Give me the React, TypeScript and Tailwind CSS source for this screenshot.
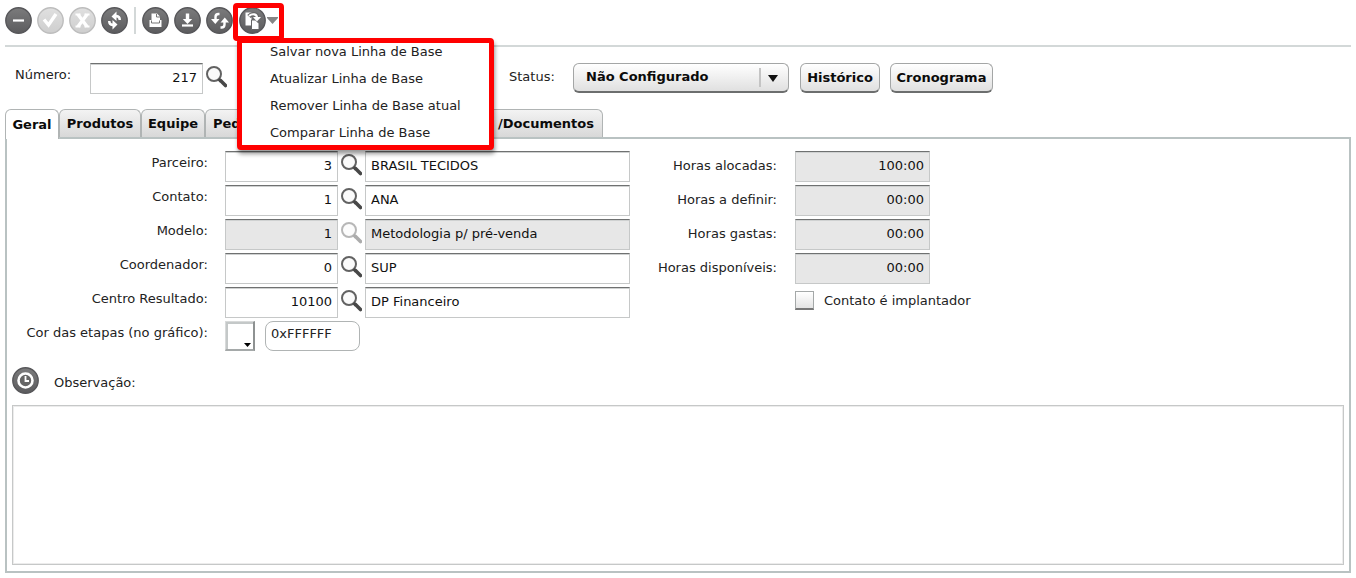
import React, { useState } from 'react';

type Field = {
  id: string;
  label: string;
  code: string;
  name: string;
  disabled?: boolean;
};

const fields: Field[] = [
  { id: 'parceiro', label: 'Parceiro:', code: '3', name: 'BRASIL TECIDOS' },
  { id: 'contato', label: 'Contato:', code: '1', name: 'ANA' },
  { id: 'modelo', label: 'Modelo:', code: '1', name: 'Metodologia p/ pré-venda', disabled: true },
  { id: 'coordenador', label: 'Coordenador:', code: '0', name: 'SUP' },
  { id: 'centro', label: 'Centro Resultado:', code: '10100', name: 'DP Financeiro' },
];

const hours = [
  { id: 'alocadas', label: 'Horas alocadas:', value: '100:00' },
  { id: 'definir', label: 'Horas a definir:', value: '00:00' },
  { id: 'gastas', label: 'Horas gastas:', value: '00:00' },
  { id: 'disponiveis', label: 'Horas disponíveis:', value: '00:00' },
];

const menuItems = [
  'Salvar nova Linha de Base',
  'Atualizar Linha de Base',
  'Remover Linha de Base atual',
  'Comparar Linha de Base',
];

const inputClass =
  'h-[31px] border border-[#c6c8c8] border-t-[#6f7171] px-[5px] pb-0.5 text-[13px] text-[#111] shadow-[inset_0_1px_0_#cfd1d1] outline-none';
const buttonClass =
  'h-[30px] rounded-md border border-[#a4a6a6] border-b-2 border-b-[#6c6e6e] bg-linear-to-b from-white to-[#e0e0e0] font-bold text-[#0b0b0b]';

// Round toolbar icon, the glyph goes in as children on a 27x27 canvas
const RoundIcon = ({ light, children }: { light?: boolean; children: React.ReactNode }) => (
  <svg className="h-[27px] w-[27px] shrink-0" viewBox="0 0 27 27" fill="none">
    <defs>
      <linearGradient id="dark" x1="0" y1="0" x2="0" y2="1">
        <stop offset="0" stopColor="#7b7b7c" />
        <stop offset="1" stopColor="#5c5c5e" />
      </linearGradient>
      <linearGradient id="light" x1="0" y1="0" x2="0" y2="1">
        <stop offset="0" stopColor="#e0e0e0" />
        <stop offset="1" stopColor="#cecece" />
      </linearGradient>
    </defs>
    <circle
      cx="13.5"
      cy="13.5"
      r="12.7"
      fill={light ? 'url(#light)' : 'url(#dark)'}
      stroke={light ? '#bdbdbd' : '#57575a'}
      strokeWidth="1.4"
    />
    {children}
  </svg>
);

const ToolButton = ({ label, light, children }: { label: string; light?: boolean; children: React.ReactNode }) => (
  <button type="button" aria-label={label} disabled={light} className="shrink-0">
    <RoundIcon light={light}>{children}</RoundIcon>
  </button>
);

const SearchButton = ({ label, disabled }: { label: string; disabled?: boolean }) => (
  <button type="button" aria-label={label} disabled={disabled} className="shrink-0">
    <svg className={disabled ? 'h-6 w-[21px] opacity-45' : 'h-6 w-[21px]'} viewBox="0 0 21 24" fill="none">
      <circle cx="8" cy="9" r="7" fill="#fafafa" stroke="#626262" strokeWidth="2" />
      <path d="M12.500 14l2.500 2.500" stroke="#4a4a4a" strokeWidth="3" />
      <path d="M14.500 15.500l5 5" stroke="#484848" strokeWidth="3.600" strokeLinecap="round" />
    </svg>
  </button>
);

const Toolbar = () => (
  <div className="flex h-[47px] gap-[5px] border-b-2 border-[#d3d8d8] pt-[7px] pb-[11px]">
    <ToolButton label="Remover">
      <path d="M8 13.5h11" stroke="#fff" strokeWidth="2.2" />
    </ToolButton>
    <ToolButton label="Confirmar" light>
      <path d="M7 12.500l4.500 5.500 7.500-11" stroke="#fff" strokeWidth="3.4" />
    </ToolButton>
    <ToolButton label="Cancelar" light>
      <path d="M9 7.500l9 12M18 7.500l-9 12" stroke="#fff" strokeWidth="3.4" />
      <path d="M6.500 7.500h5M15.500 7.500h5M6.500 19.500h5M15.500 19.500h5" stroke="#fff" strokeWidth="2" />
    </ToolButton>
    <ToolButton label="Atualizar">
      <path d="M10.500 9.500l5-5v3.200c3 .2 4.500 2 4.500 5.300h-2.500c0-1.700-.6-2.400-2-2.500v3.500z" fill="#fff" />
      <path d="M16.500 17.500l-5 5v-3.200C8.500 19.100 7 17.300 7 14h2.500c0 1.700.6 2.400 2 2.500V13z" fill="#fff" />
    </ToolButton>
    <div className="mx-px w-0.5 shrink-0 bg-[#d3d8d8]" />
    <ToolButton label="Imprimir">
      <path d="M9.500 13.500V6.500h5.500l3 3v4z" fill="#fff" />
      <path d="M14.500 7v3H18" stroke="#777" strokeWidth="1" />
      <path d="M7.500 13h12v7h-12z" fill="#fff" />
      <path d="M9.500 13.500v2.500h8v-2.500" stroke="#777" strokeWidth="1" />
    </ToolButton>
    <ToolButton label="Baixar">
      <path d="M11.800 6.500h3.400v5.500h3l-4.700 5-4.700-5h3z" fill="#fff" />
      <path d="M8 18.500h11" stroke="#fff" strokeWidth="2.200" />
    </ToolButton>
    <ToolButton label="Sincronizar">
      <path d="M13.500 7h-1c-2 0-3 1-3 3v4" stroke="#fff" strokeWidth="2.400" />
      <path d="M5 12h8.500l-4.200 5z" fill="#fff" />
      <path d="M14.500 20.500h1c2 0 3-1 3-3V14" stroke="#fff" strokeWidth="2.400" />
      <path d="M14.500 15.500H23l-4.200-5z" fill="#fff" />
    </ToolButton>
    <BaselineMenu />
  </div>
);

const BaselineMenu = () => (
  <div className="relative ml-px flex shrink-0">
    <button type="button" aria-label="Linha de Base" aria-haspopup="menu" className="flex items-center gap-px">
      <RoundIcon>
        <path d="M6.500 5.500h6v13h-6z" fill="#fff" />
        <path d="M12.500 13h4l3.500 3.500v6h-7.500z" fill="#fff" stroke="#666" strokeWidth="1" />
        <path d="M10 9.500c3-3.500 8-3 8 1.500" stroke="#666" strokeWidth="4.500" />
        <path d="M10 9c3.500-3 8-2 8 2" stroke="#fff" strokeWidth="2.200" />
        <path d="M14 10h8l-4 4.500z" fill="#fff" />
      </RoundIcon>
      <svg className="h-[7px] w-[11px]" viewBox="0 0 11 7">
        <path d="M0 0h11v1L5.500 7 0 1z" fill="#858585" />
      </svg>
    </button>
    <div className="pointer-events-none absolute -top-1 -left-1.5 h-[38px] w-[51px] rounded-sm border-[5px] border-[#f00]" />
    <div
      role="menu"
      className="absolute top-[31px] -left-0.5 z-10 flex w-[257px] flex-col gap-[9px] rounded-sm border-[5px] border-[#f00] bg-white pb-[3px] pl-7 shadow-[1px_4px_4px_rgba(0,0,0,0.4)]"
    >
      {menuItems.map((item) => (
        <button key={item} type="button" role="menuitem" className="text-left leading-[18px] whitespace-nowrap">
          {item}
        </button>
      ))}
    </div>
  </div>
);

const Tab = ({ children, active, className = '' }: { children: React.ReactNode; active?: boolean; className?: string }) => (
  <button
    type="button"
    role="tab"
    aria-selected={!!active}
    className={`shrink-0 rounded-t-md border border-b-0 border-[#b0b4b4] font-bold text-[#0b0b0b] ${
      active ? '-mb-0.5 h-[30px] bg-white' : 'h-7 bg-linear-to-b from-[#f3f3f3] to-[#d8d8d8]'
    } ${className}`}
  >
    {children}
  </button>
);

const App = () => {
  const [implantador, setImplantador] = useState(false);

  return (
    <div className="bg-white px-[5px] pb-[5px] font-['DejaVu_Sans',Verdana,sans-serif] text-[13px] leading-[18px] text-[#222]">
      <Toolbar />

      <div className="flex h-[62px] items-start pt-4">
        <label htmlFor="numero" className="w-[85px] pt-[3px] pl-2.5">Número:</label>
        <input id="numero" defaultValue="217" className={`${inputClass} w-[113px] text-right`} />
        <div className="pt-0.5 pl-[3px]">
          <SearchButton label="Pesquisar número" />
        </div>
        <label htmlFor="status" className="ml-[282px] w-16 pt-[5px]">Status:</label>
        <div className="relative">
          <select id="status" className={`${buttonClass} w-[216px] appearance-none pb-0.5 pl-3 outline-none`}>
            <option>Não Configurado</option>
          </select>
          <svg className="pointer-events-none absolute top-[5px] right-2.5 h-5 w-5" viewBox="0 0 20 20">
            <path d="M1 0v19" stroke="#c4c4c4" strokeWidth="2" />
            <path d="M9 7h10l-5 7z" fill="#111" />
          </svg>
        </div>
        <button type="button" className={`${buttonClass} ml-[11px] w-20`}>Histórico</button>
        <button type="button" className={`${buttonClass} ml-2.5 w-[103px]`}>Cronograma</button>
      </div>

      <div role="tablist" className="flex w-[598px]">
        <Tab active className="relative w-[54px]">Geral</Tab>
        <Tab className="w-[82px]">Produtos</Tab>
        <Tab className="w-16">Equipe</Tab>
        <Tab className="w-[82px] pl-[7px] text-left">Pedidos</Tab>
        <Tab className="grow pr-2 text-right">Anexos /Documentos</Tab>
      </div>

      <div className="border-2 border-[#b9c2c2] px-[5px] pt-3 pb-1.5">
        <div className="flex">
          <div className="flex flex-col gap-[3px]">
            {fields.map((field) => (
              <div key={field.id} className="flex">
                <label htmlFor={field.id} className="w-[196px] pt-[3px] text-right">{field.label}</label>
                <input
                  id={field.id}
                  defaultValue={field.code}
                  disabled={field.disabled}
                  className={`${inputClass} ml-[17px] w-[113px] text-right ${field.disabled ? 'bg-[#e7e7e7]' : ''}`}
                />
                <div className="px-[3px] pt-0.5">
                  <SearchButton label={`Pesquisar ${field.id}`} disabled={field.disabled} />
                </div>
                <input
                  aria-label={`Nome ${field.id}`}
                  defaultValue={field.name}
                  disabled={field.disabled}
                  className={`${inputClass} w-[265px] ${field.disabled ? 'bg-[#e7e7e7]' : ''}`}
                />
              </div>
            ))}
            <div className="flex">
              <label htmlFor="cor" className="w-[196px] pt-[3px] text-right">Cor das etapas (no gráfico):</label>
              <button
                type="button"
                aria-label="Escolher cor"
                className="ml-[17px] flex h-[30px] w-[30px] items-end justify-end border border-r-2 border-b-2 border-[#d8dada] border-r-[#8e9292] border-b-[#a5a9a9] p-0.5 shadow-[inset_2px_2px_0_#c4c8c8]"
              >
                <svg className="h-1 w-[7px]" viewBox="0 0 7 4">
                  <path d="M0 0h7L3.500 4z" fill="#000" />
                </svg>
              </button>
              <input
                id="cor"
                defaultValue="0xFFFFFF"
                className="ml-2.5 h-[30px] w-[95px] rounded-lg border border-[#b0b4b4] px-[5px] pb-1.5 outline-none"
              />
            </div>
          </div>

          <div className="ml-5 flex flex-col gap-[3px]">
            {hours.map((hour) => (
              <div key={hour.id} className="flex items-center">
                <label htmlFor={hour.id} className="w-[127px] pb-px text-right">{hour.label}</label>
                <input
                  id={hour.id}
                  defaultValue={hour.value}
                  readOnly
                  className={`${inputClass} ml-[18px] w-[135px] bg-[#e7e7e7] text-right`}
                />
              </div>
            ))}
            <label className="mt-1 ml-[145px] flex items-center gap-2.5">
              <input
                type="checkbox"
                checked={implantador}
                onChange={(e) => setImplantador(e.target.checked)}
                className="h-[19px] w-[19px] appearance-none border border-b-2 border-[#a4a8a8] border-b-[#777] bg-linear-to-b from-white to-[#e4e4e4] checked:bg-[#777]"
              />
              Contato é implantador
            </label>
          </div>
        </div>

        <div className="mt-4 flex items-center gap-[15px]">
          <RoundIcon>
            <circle cx="13.5" cy="13.5" r="7" fill="#666" stroke="#fff" strokeWidth="2.6" />
            <path d="M13.5 9v5H17" stroke="#fff" strokeWidth="1.8" />
          </RoundIcon>
          <label htmlFor="observacao" className="pt-1">Observação:</label>
        </div>
        <textarea
          id="observacao"
          className="mt-[11px] block h-40 w-full resize-none border border-[#c6c8c8] p-1 shadow-[inset_0_0_0_1px_#ececec] outline-none"
        />
      </div>
    </div>
  );
};

export default App;
